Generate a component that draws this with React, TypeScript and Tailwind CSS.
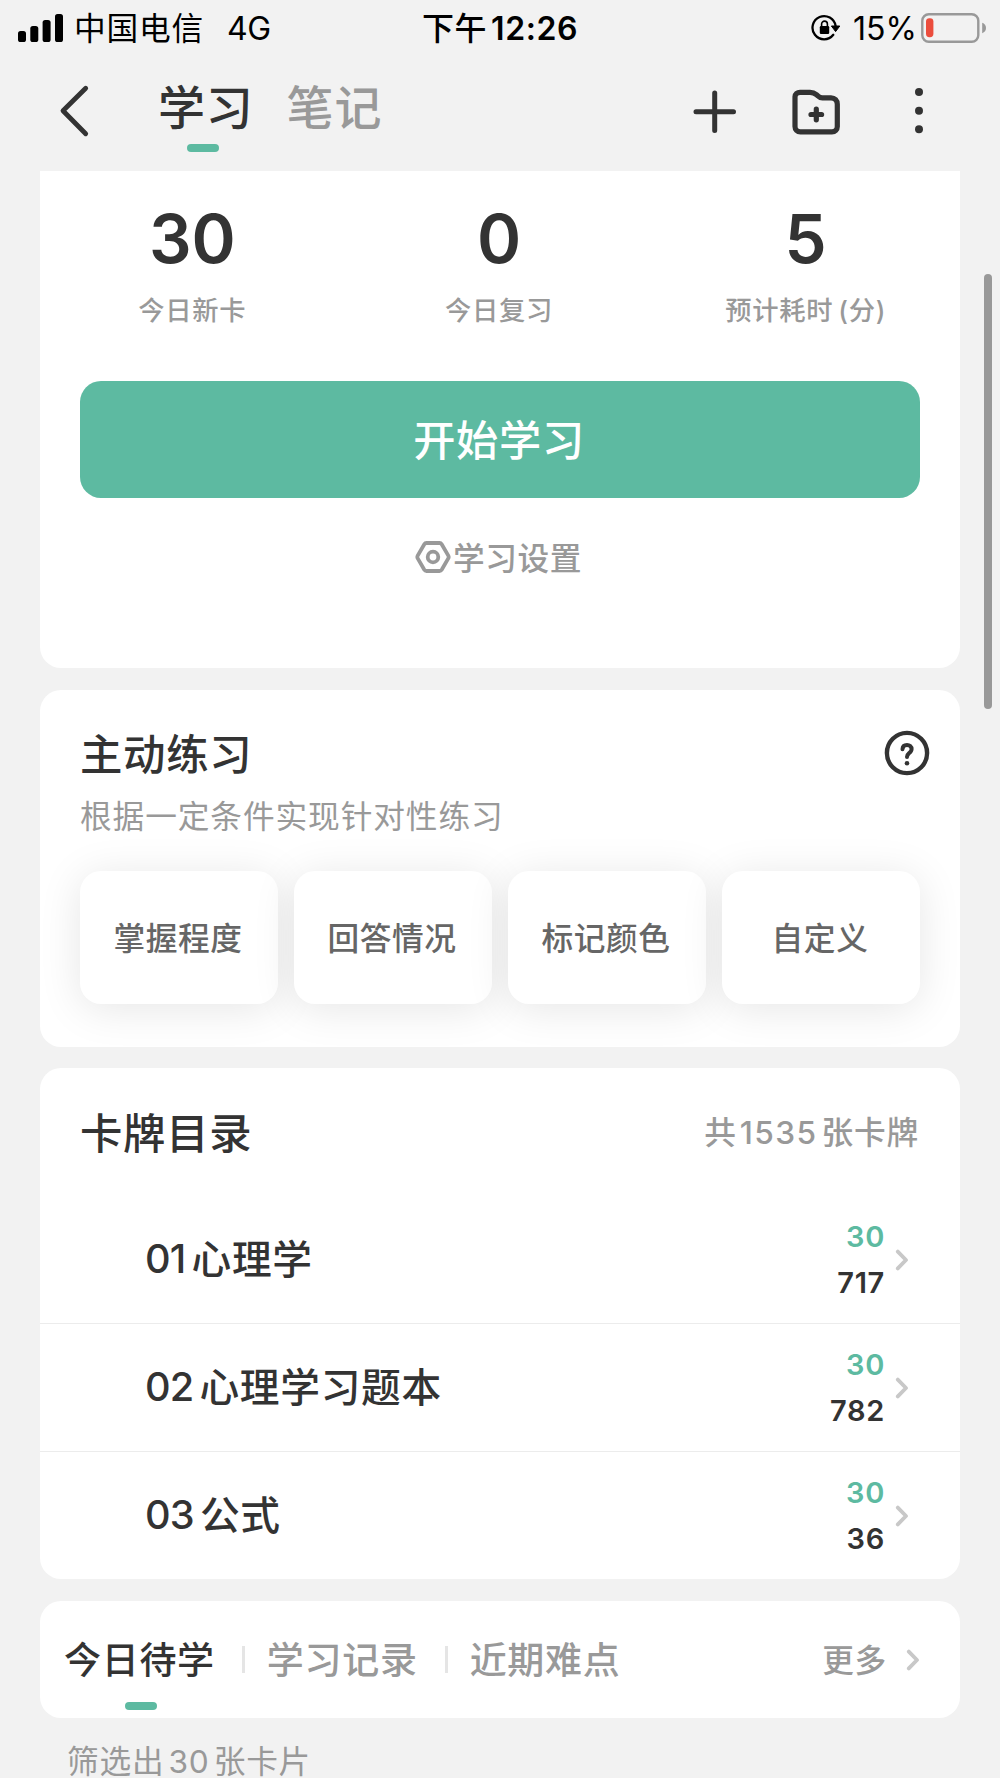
import { ReactNode } from "react";
import clsx from "clsx";

interface Deck {
  no: string;
  name: string;
  today: number;
  total: number;
}

const stats = [
  { value: "30", label: "今日新卡" },
  { value: "0", label: "今日复习" },
  { value: "5", label: "预计耗时", unit: "(分)" },
];

const practiceModes = ["掌握程度", "回答情况", "标记颜色", "自定义"];

const decks: Deck[] = [
  { no: "01", name: "心理学", today: 30, total: 717 },
  { no: "02", name: "心理学习题本", today: 30, total: 782 },
  { no: "03", name: "公式", today: 30, total: 36 },
];

const tabs = ["今日待学", "学习记录", "近期难点"];

const ChevronRight = ({ className }: { className?: string }) => (
  <svg width="14" height="22" viewBox="0 0 14 22" fill="none" className={className}>
    <path d="M2.8 2.6 11 11l-8.2 8.4" stroke="currentColor" strokeWidth="3.8" strokeLinecap="round" strokeLinejoin="round" />
  </svg>
);

const StatusBar = () => (
  <div className="flex h-[55px] items-center pl-[18px] text-[32px] leading-[55px] text-black">
    <svg width="46" height="28" viewBox="0 0 46 28" fill="currentColor">
      <rect x="0" y="17" width="8" height="11" rx="2.6" />
      <rect x="12.3" y="12" width="8" height="16" rx="2.6" />
      <rect x="24.6" y="6" width="8" height="22" rx="2.6" />
      <rect x="37" y="0" width="8" height="28" rx="2.6" />
    </svg>
    <span className="ml-[10px] w-[153px] pt-px text-[31.7px] tracking-[0.8px]">中国电信</span>
    <span className="w-[195px] pt-px tracking-[-0.5px]">4G</span>
    <span className="flex w-[389px] pt-px font-semibold">
      <span className="w-[69px] font-medium tracking-[0.6px]">下午</span>
      <span className="tracking-[0.6px]">12:26</span>
    </span>
    <svg width="30" height="28" viewBox="0 0 30 28" fill="none" className="shrink-0">
      <path d="M22.3 20.8A11.6 11.6 0 1 1 24.6 12" stroke="currentColor" strokeWidth="2.3" strokeLinecap="round" />
      <path d="M20.4 12h8.4l-4.2 5.6z" fill="currentColor" stroke="currentColor" strokeLinejoin="round" />
      <rect x="8.8" y="12" width="9.4" height="8" rx="1.2" fill="currentColor" />
      <path d="M10.6 12.4V10a2.9 2.9 0 0 1 5.8 0v2.4" stroke="currentColor" strokeWidth="1.6" />
    </svg>
    <span className="ml-[12px] w-[68px] pt-px">15%</span>
    <svg width="66" height="30" viewBox="0 0 66 30" fill="none" className="shrink-0">
      <rect x="1.3" y="1.3" width="56" height="27.4" rx="6.5" stroke="#999" strokeWidth="2.4" />
      <rect x="5" y="5.2" width="7.4" height="19" rx="3.4" fill="#eb4d3d" />
      <path d="M61.2 9.8c2.4.9 3.8 2.8 3.8 5.2s-1.4 4.3-3.8 5.2z" fill="#999" />
    </svg>
  </div>
);

const NavBar = () => (
  <header className="flex h-[116px] items-start pl-[58px] text-[#333]">
    <svg width="32" height="56" viewBox="0 0 32 56" fill="none" className="mt-[28px]">
      <path d="M27.7 5.3 5 27.8l22.7 22.9" stroke="currentColor" strokeWidth="4.8" strokeLinecap="round" strokeLinejoin="round" />
    </svg>
    <div className="ml-[68px] flex w-[534px] gap-[33px] text-[47px] leading-[56px] font-medium tracking-[0.7px]">
      <div className="mt-[25px] flex flex-col items-center">
        <span>学习</span>
        <span className="mt-[8px] -ml-[6px] h-2 w-8 rounded-full bg-[#5dbaa1]" />
      </div>
      <span className="mt-[25px] tracking-[1.2px] text-[#999]">笔记</span>
    </div>
    <svg width="46" height="46" viewBox="0 0 46 46" fill="none" className="mt-[34px] shrink-0">
      <path d="M22.7 4v37.5M4 22.8h37.5" stroke="currentColor" strokeWidth="5" strokeLinecap="round" />
    </svg>
    <svg width="50" height="48" viewBox="0 0 50 48" fill="none" className="mt-[33px] ml-[53px] shrink-0">
      <path
        d="M9 4.3h10c2.8 0 4.6.8 6.6 2.5l1.4 1.2c1.4 1.5 2.4 1.9 4.5 1.9H40c3.8 0 6.3 2.6 6.3 6.4v22.2c0 3.2-2.2 5.3-5.4 5.3H9.4C6.2 43.8 4 41.7 4 38.5V8.8c0-2.7 2.3-4.5 5-4.5z"
        stroke="currentColor"
        strokeWidth="5.2"
        strokeLinejoin="round"
      />
      <path d="M25.3 21.2v10.6M20 26.5h10.6" stroke="currentColor" strokeWidth="5.2" strokeLinecap="round" />
    </svg>
    <svg width="8" height="48" viewBox="0 0 8 48" fill="currentColor" className="mt-[32px] ml-[74px] shrink-0">
      <circle cx="4" cy="5" r="4" />
      <circle cx="4" cy="23.7" r="4" />
      <circle cx="4" cy="42.3" r="4" />
    </svg>
  </header>
);

const Card = ({ className, children }: { className?: string; children: ReactNode }) => (
  <section className={clsx("rounded-[21px] bg-white", className)}>{children}</section>
);

export default function App() {
  return (
    <div className="relative h-[1778px] w-[1000px] overflow-hidden bg-[#f2f2f2] font-[Inter,'Noto_Sans_CJK_SC',sans-serif] text-[#333]">
      <StatusBar />
      <NavBar />

      <main className="flex flex-col px-[40px]">
        <Card className="h-[497px] rounded-t-none px-[40px]">
          <div className="-mr-[39px] -ml-[41px] grid grid-cols-3 text-center">
            {stats.map((s) => (
              <div key={s.label}>
                <p className="mt-[28px] h-[80px] text-[67px] leading-[80px] font-semibold">{s.value}</p>
                <p className="mt-[12px] h-[40px] text-[26.3px] leading-[40px] font-medium tracking-[0.7px] text-[#999]">
                  {s.label}
                  {s.unit && <span className="ml-[5px]">{s.unit}</span>}
                </p>
              </div>
            ))}
          </div>
          <button className="mt-[50px] h-[117px] w-full rounded-[21px] bg-[#5dbaa1] pt-[3px] pr-[2px] text-[42.2px] font-medium tracking-[0.7px] text-white">
            开始学习
          </button>
          <div className="mt-[39px] flex h-[40px] items-center justify-center gap-[2px] pr-[3px] text-[31.7px] leading-[40px] font-medium tracking-[0.6px] text-[#999]">
            <svg width="36" height="32" viewBox="0 0 36 32" fill="none">
              <path
                d="M11.5 2h13c1 0 1.7.4 2.2 1.2l6.6 11.4c.5.9.5 1.9 0 2.8l-6.6 11.4c-.5.8-1.2 1.2-2.2 1.2h-13c-1 0-1.7-.4-2.2-1.2L2.7 17.4c-.5-.9-.5-1.9 0-2.8L9.3 3.2C9.8 2.4 10.5 2 11.5 2z"
                stroke="currentColor"
                strokeWidth="3.8"
              />
              <circle cx="18" cy="16" r="5.3" stroke="currentColor" strokeWidth="3.8" />
            </svg>
            <span className="pt-[3px]">学习设置</span>
          </div>
        </Card>

        <Card className="mt-[22px] h-[357px] px-[40px] pt-[38px]">
          <div className="flex h-[50px] items-center justify-between">
            <h2 className="pt-[3px] text-[42.4px] leading-[50px] font-medium tracking-[0.7px]">主动练习</h2>
            <svg width="46" height="46" viewBox="0 0 46 46" fill="none" className="-mr-[10px]">
              <circle cx="23" cy="23" r="20.1" stroke="currentColor" strokeWidth="4.4" />
              <path d="M18.5 19.3c.1-2.9 2-4.4 4.500-4.400s4.600 1.600 4.600 4.200c0 2-1.100 3-2.500 4-1.400 1.100-2.100 1.800-2.100 4" stroke="currentColor" strokeWidth="4" strokeLinecap="round" />
              <circle cx="23" cy="33.3" r="2.3" fill="currentColor" />
            </svg>
          </div>
          <p className="mt-[19px] text-[31.7px] leading-[40px] tracking-[0.9px] text-[#999]">根据一定条件实现针对性练习</p>
          <div className="mt-[34px] grid grid-cols-4 gap-4">
            {practiceModes.map((mode) => (
              <button
                key={mode}
                className="h-[133px] rounded-[21px] bg-white pt-[3px] pr-[2px] text-[31.7px] font-medium tracking-[0.6px] text-[#666] shadow-[0_5px_43px_rgba(0,0,0,0.1)]"
              >
                {mode}
              </button>
            ))}
          </div>
        </Card>

        <Card className="mt-[21px] h-[511px]">
          <div className="flex h-[128px] items-center justify-between pr-[41px] pl-[40px]">
            <h2 className="pt-[3px] text-[42.4px] leading-[50px] font-medium tracking-[0.7px]">卡牌目录</h2>
            <p className="pt-[2px] text-[31.7px] leading-[50px] font-medium tracking-[0.8px] text-[#999]">
              共<span className="mr-[4px] ml-[3px] tracking-[1.4px]">1535</span>张卡牌
            </p>
          </div>
          {decks.map((deck, i) => (
            <div
              key={deck.no}
              className={clsx("flex items-center pr-[51px] pl-[105px]", i < decks.length - 1 ? "h-[128px] border-b border-[#ececec]" : "h-[127px]")}
            >
              <span className="flex flex-1 text-[39.7px] leading-[50px] font-medium tracking-[0.5px]">
                <span className="tracking-[-0.8px]">{deck.no}</span>
                <span className="ml-[6px] pt-px tracking-[0.7px]">{deck.name}</span>
              </span>
              <span className="flex flex-col text-right text-[29px] leading-[46px] font-semibold tracking-[0.7px]">
                <span className="text-[#5dbaa1]">{deck.today}</span>
                <span>{deck.total}</span>
              </span>
              <ChevronRight className="ml-[10px] text-[#c8c8c8]" />
            </div>
          ))}
        </Card>

        <Card className="mt-[22px] flex h-[117px] items-center pr-[40px] pl-[24px]">
          {tabs.map((tab, i) => (
            <div key={tab} className="flex items-center text-[37px] leading-[50px] font-medium tracking-[0.7px]">
              {i > 0 && <span className="mr-[22px] ml-[27px] h-[27px] w-[3px] bg-[#e5e5e5]" />}
              <span className={clsx("relative pt-[3px]", i > 0 && "text-[#999]")}>
                {tab}
                {i === 0 && <span className="absolute top-[69px] left-[61px] h-2 w-8 rounded-full bg-[#5dbaa1]" />}
              </span>
            </div>
          ))}
          <span className="ml-auto pt-[3px] text-[31.7px] font-medium tracking-[0.7px] text-[#999]">更多</span>
          <ChevronRight className="ml-[19px] text-[#c8c8c8]" />
        </Card>

        <p className="mt-[26px] pl-[27px] text-[31.7px] leading-[36px] tracking-[0.8px] text-[#999]">
          筛选出<span className="mx-[4px]">30</span>张卡片
        </p>
      </main>

      {/* scroll indicator */}
      <div className="absolute top-[274px] right-2 h-[435px] w-2 rounded-full bg-[#999]" />
    </div>
  );
}
